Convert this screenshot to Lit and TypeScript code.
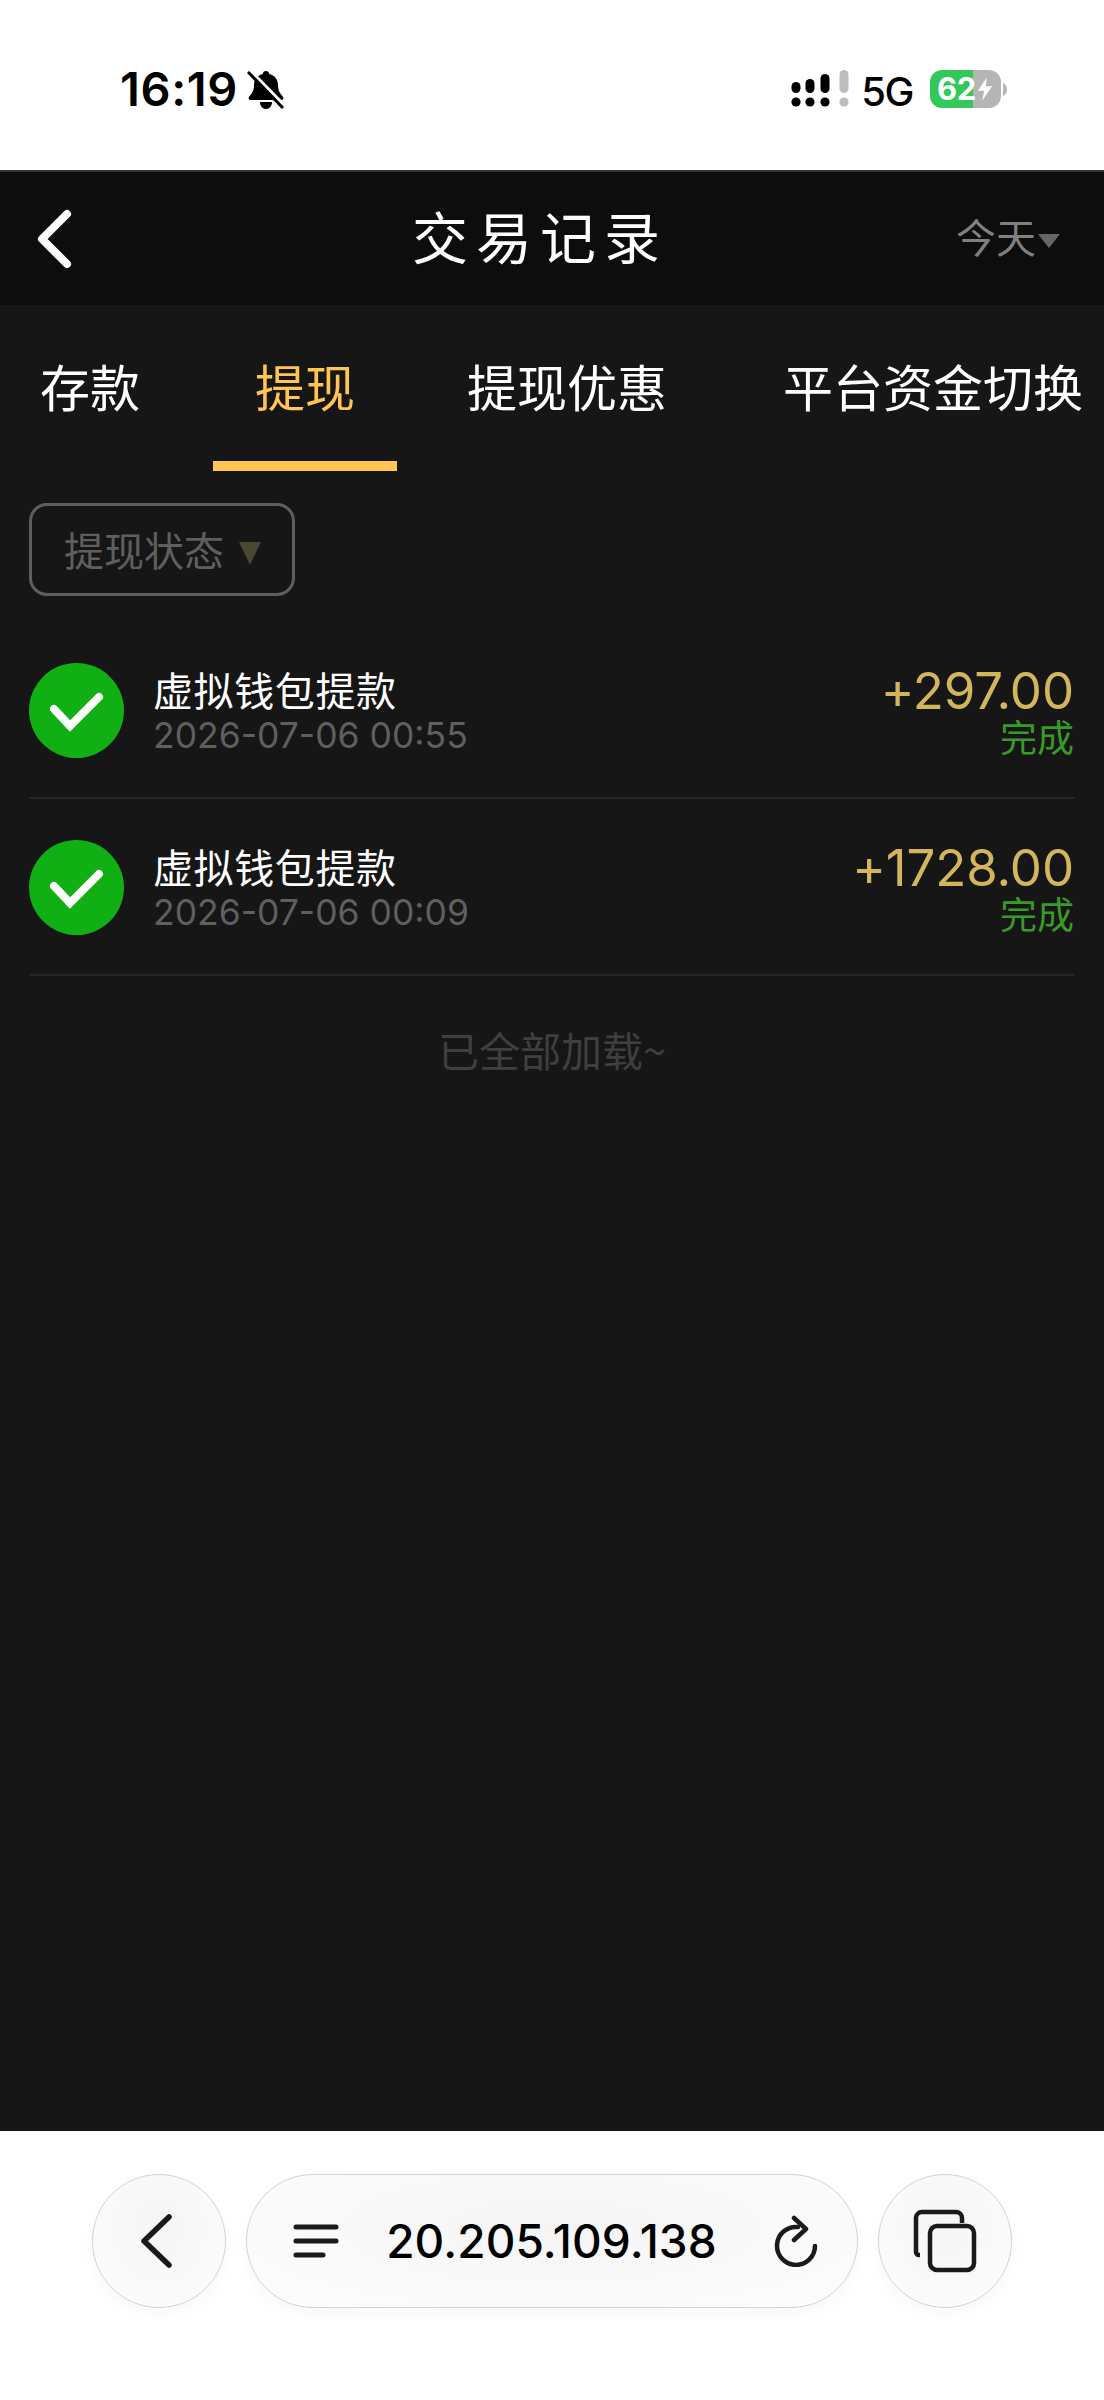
import { LitElement, html, css } from "lit";
import { customElement } from "lit/decorators.js";

const rows = [
  { date: "2026-07-06 00:55", amount: "+297.00" },
  { date: "2026-07-06 00:09", amount: "+1728.00" },
];

@customElement("app-root")
export class AppRoot extends LitElement {
  static styles = css`
    :host { display: block; width: 1104px; height: 2400px; overflow: hidden; background: #fff;
      font-family: "Noto Sans CJK SC", "Noto Sans", sans-serif; }
    svg { display: block; flex: none; }
    .status { height: 170px; box-sizing: border-box; padding: 66px 97px 0 120px; display: flex; align-items: flex-start; color: #000; background: #fff; }
    .time { font: 600 47px/46px Inter, sans-serif; letter-spacing: 0.6px; margin-top: 0; width: 116px; white-space: nowrap; }
    .bell { margin: 5px 0 0 11px; }
    .spacer { flex: 1; }
    .signal { margin: 4px 0 0 1px; }
    .bar4 { margin: 4px 0 0 0; }
    .fiveg { font: 500 40px/40px Inter, sans-serif; letter-spacing: -1.5px; margin: 6px 17px 0 12px; }
    .battery { width: 71px; height: 38px; border-radius: 12px; margin-top: 4px; display: flex; align-items: center; position: relative;
      background: linear-gradient(90deg, #34c759 0 43px, #b5b5b5 43px); color: #fff; font: 700 31px/38px Inter, sans-serif; padding-left: 7px; box-sizing: border-box; letter-spacing: -0.5px; }
    .bolt { position: absolute; left: 47px; top: 7px; }
    .nub { margin: 17px 0 0 2px; }

    .header { height: 135px; background: #0d0d0d; border-top: 2px solid #333; box-sizing: border-box; display: flex; align-items: center; padding: 0 44px 0 34px; color: #fff; }
    .title { font-size: 56px; line-height: 70px; letter-spacing: 8px; color: #fff; margin: 0 0 8px 338px; flex: none; }
    .range { font-size: 40px; line-height: 50px; color: #808080; display: flex; align-items: center; flex: none; margin: 0 0 6px auto; }
    .range svg { margin: 10px 0 0 2px; }

    .body { height: 1826px; background: #161616; box-sizing: border-box; }
    .tabs { display: flex; height: 166px; margin-left: -2px; width: 1106px; overflow: hidden; box-sizing: border-box; }
    .tab { flex: none; padding: 44px 42px 0; font-size: 50px; line-height: 72px; height: 166px; box-sizing: border-box; color: #fff; white-space: nowrap; position: relative; }
    .tab.t1 { margin-right: 31px; }
    .tab.t2 { margin-right: 28px; }
    .tab.t3 { margin-right: 32px; }
    .tab.on { color: #ffc552; }
    .tab.on::after { content: ""; position: absolute; left: 0; right: 0; bottom: 0; height: 10px; background: #ffc552; }

    .filter { margin: 32px 0 0 29px; width: 266px; height: 93px; box-sizing: border-box; border: 3px solid #5e5e5e; border-radius: 18px; display: flex; align-items: center; padding: 0 0 2px 32px; gap: 15px; color: #5f5f5f; font-size: 40px; line-height: 50px; }
    .filter svg { margin-top: 9px; }

    .list { margin-top: 26px; }
    .row { margin: 0 29px; height: 177px; width: 1046px; box-sizing: border-box; border-bottom: 2px solid #262626; display: flex; align-items: center; padding-top: 1px; }
    .dot { width: 95px; height: 95px; border-radius: 50%; background: #10b014; flex: none; margin-right: 29px; display: flex; align-items: center; justify-content: center; }
    .info { flex: 1; display: flex; flex-direction: column; margin-top: 4px; }
    .name { font-size: 40px; line-height: 44px; color: #fff; letter-spacing: 0.6px; }
    .date { font: 400 35.5px/42px Inter, sans-serif; color: #5f5f5f; white-space: nowrap; margin-top: 4px; }
    .right { display: flex; flex-direction: column; align-items: flex-end; padding-right: 1px; }
    .amount { font: 400 51px/52px Inter, sans-serif; letter-spacing: -0.1px; color: #d3b65c; }
    .state { font-size: 37px; line-height: 38px; color: #3a9a28; }
    .end { text-align: center; font-size: 41px; line-height: 50px; color: #3f3f3f; margin-top: 48px; width: 1104px; }

    .bar { height: 269px; background: #fff; box-sizing: border-box; padding: 43px 92px 0; display: flex; gap: 20px; color: #000; }
    .round, .pill { height: 134px; box-sizing: border-box; border: 1.5px solid #d2d2d2; background: radial-gradient(ellipse at 50% 40%, #f5f5f5, #fdfdfd); box-shadow: 0 6px 16px rgba(0,0,0,.03); display: flex; align-items: center; }
    .round { width: 134px; border-radius: 50%; justify-content: center; flex: none; }
    .pill { width: 612px; border-radius: 67px; padding: 0 39px 0 46px; flex: none; }
    .url { flex: 1; text-align: center; font: 500 46px/54px Inter, sans-serif; letter-spacing: 0.1px; white-space: nowrap; color: #000; padding-right: 10px; }
  `;

  private check() {
    return html`<svg width="95" height="95" viewBox="0 0 95 95"><path d="M25 46 L41 63 L70 34" fill="none" stroke="#fff" stroke-width="8" stroke-linecap="round" stroke-linejoin="miter"/></svg>`;
  }

  render() {
    return html`
      <div class="status">
        <span class="time">16:19</span>
        <svg class="bell" width="38" height="38" viewBox="0 0 38 38">
          <path d="M19 0c2 0 3 1 3.300 3 6 1.500 8.700 6 8.700 11 0 6 2 8 5 12 1 1.500 0 3-2 3H4c-2 0-3-1.500-2-3 3-4 5-6 5-12 0-5 2.700-9.500 8.700-11C16 1 17 0 19 0zM13 31h12c0 4-2.500 7-6 7s-6-3-6-7z" fill="#000"/>
          <path d="M4 0 L38 35" stroke="#fff" stroke-width="3"/>
          <path d="M1 1 L36 37" stroke="#000" stroke-width="3"/>
        </svg>
        <span class="spacer"></span>
        <svg class="signal" width="48" height="40" viewBox="0 0 48 40">
          <circle cx="5" cy="32" r="4.600" fill="#000"/><circle cx="19" cy="32" r="4.600" fill="#000"/><circle cx="34" cy="32" r="4.600" fill="#000"/>
          <rect x="0.500" y="12" width="9" height="11" rx="4.500" fill="#000"/>
          <rect x="14.500" y="9" width="9" height="14" rx="4.500" fill="#000"/>
          <rect x="29.500" y="4" width="9" height="19" rx="4.500" fill="#000"/>
        </svg>
        <svg class="bar4" width="10" height="40" viewBox="0 0 10 40">
          <rect x="0.500" y="0" width="9" height="23" rx="4.500" fill="#bdbdbd"/>
          <circle cx="5" cy="32" r="4.600" fill="#bdbdbd"/>
        </svg>
        <span class="fiveg">5G</span>
        <div class="battery">62
          <svg class="bolt" width="16" height="24" viewBox="0 0 18 26"><path d="M11 0 L1 15 H8 L6 26 L17 10 H10 Z" fill="#fff"/></svg>
        </div>
        <svg class="nub" width="4" height="13" viewBox="0 0 4 13"><path d="M0 0c2.500 1 4 3.500 4 6.500S2.500 12 0 13z" fill="#b5b5b5"/></svg>
      </div>

      <div class="header">
        <svg width="40" height="72" viewBox="0 0 40 72"><path d="M33 11 L8 36 L33 61" fill="none" stroke="#fff" stroke-width="8" stroke-linecap="round" stroke-linejoin="round"/></svg>
        <span class="title">交易记录</span>
        <div class="range">今天<svg width="22" height="14" viewBox="0 0 22 14"><path d="M0 0H22L11 14Z" fill="#666"/></svg></div>
      </div>

      <div class="body">
        <div class="tabs">
          <div class="tab t1">存款</div>
          <div class="tab t2 on">提现</div>
          <div class="tab t3">提现优惠</div>
          <div class="tab">平台资金切换</div>
        </div>
        <div class="filter">提现状态<svg width="22" height="23" viewBox="0 0 22 23"><path d="M0 0H22L11 23Z" fill="#4a4631"/></svg></div>
        <div class="list">
          ${rows.map((r) => html`
            <div class="row">
              <div class="dot">${this.check()}</div>
              <div class="info"><span class="name">虚拟钱包提款</span><span class="date">${r.date}</span></div>
              <div class="right"><span class="amount">${r.amount}</span><span class="state">完成</span></div>
            </div>`)}
        </div>
        <div class="end">已全部加载~</div>
      </div>

      <div class="bar">
        <div class="round">
          <svg width="40" height="56" viewBox="0 0 40 56"><path d="M30 4 L5 28 L30 52" fill="none" stroke="#1a1a1a" stroke-width="5.500" stroke-linecap="round" stroke-linejoin="round"/></svg>
        </div>
        <div class="pill">
          <svg width="46" height="36" viewBox="0 0 46 36"><path d="M3 4H43M3 18H43M3 32H30" fill="none" stroke="#1a1a1a" stroke-width="5" stroke-linecap="round"/></svg>
          <span class="url">20.205.109.138</span>
          <svg width="44" height="52" viewBox="0 0 44 52"><path d="M24 12 A19 19 0 1 0 41 31" fill="none" stroke="#1a1a1a" stroke-width="4.500" stroke-linecap="round"/><path d="M20 3 L32 14 L20 25" fill="none" stroke="#1a1a1a" stroke-width="4.500" stroke-linecap="round" stroke-linejoin="round"/></svg>
        </div>
        <div class="round">
          <svg width="64" height="64" viewBox="0 0 64 64">
            <path d="M7 46 h-1 a3 3 0 0 1 -3 -3 V9 a6 6 0 0 1 6 -6 H43 a6 6 0 0 1 6 6 v5" fill="none" stroke="#1a1a1a" stroke-width="4.500"/>
            <rect x="17" y="17" width="44" height="44" rx="7" fill="none" stroke="#1a1a1a" stroke-width="4.500"/>
          </svg>
        </div>
      </div>
    `;
  }
}
